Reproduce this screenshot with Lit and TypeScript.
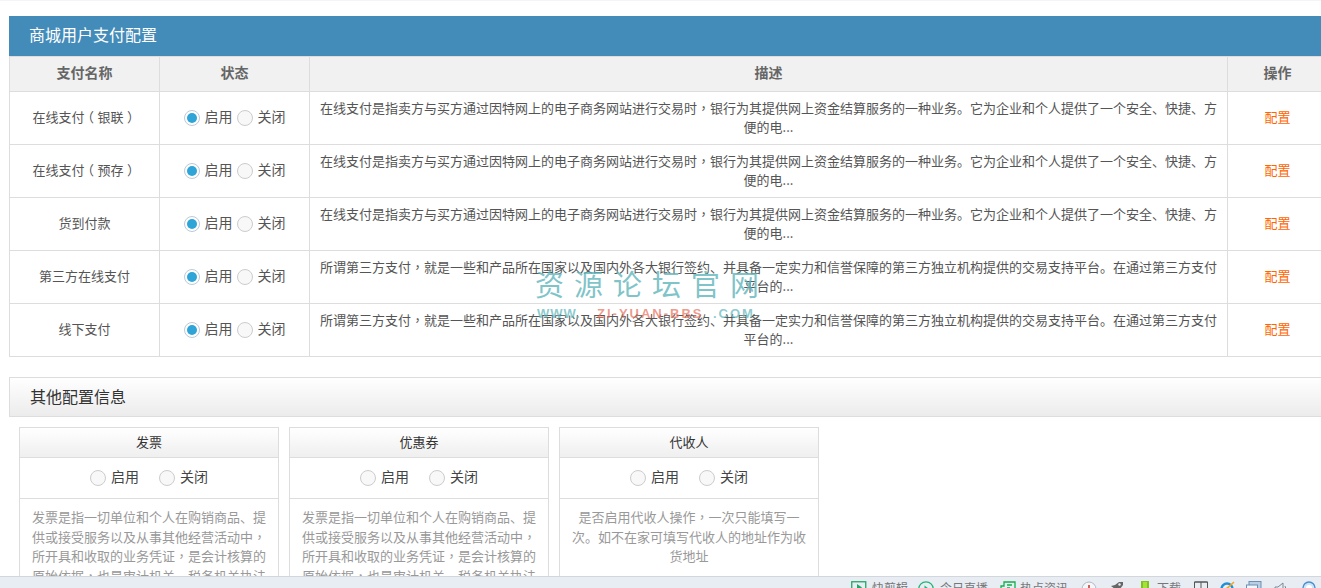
import { LitElement, html, css } from "lit";
import { customElement } from "lit/decorators.js";

const online = "在线支付是指卖方与买方通过因特网上的电子商务网站进行交易时，银行为其提供网上资金结算服务的一种业务。它为企业和个人提供了一个安全、快捷、方便的电...";
const third = "所谓第三方支付，就是一些和产品所在国家以及国内外各大银行签约、并具备一定实力和信誉保障的第三方独立机构提供的交易支持平台。在通过第三方支付平台的...";
const rows = [
  ["在线支付（银联）", online],
  ["在线支付（预存）", online],
  ["货到付款", online],
  ["第三方在线支付", third],
  ["线下支付", third],
];
const invoice = "发票是指一切单位和个人在购销商品、提供或接受服务以及从事其他经营活动中，所开具和收取的业务凭证，是会计核算的原始依据，也是审计机关、税务机关执法检查的重要依据。";
const cards = [
  ["发票", invoice],
  ["优惠券", invoice],
  ["代收人", "是否启用代收人操作，一次只能填写一次。如不在家可填写代收人的地址作为收货地址"],
];

/* Full-width commas and brackets sit mid-cell in the reference. */
const punct = (text: string) =>
  text.split(/([，（）])/).map((part) => {
    if (part === "，") return html`<span class="pc">${part}</span>`;
    if (part === "（") return html`<span class="po">${part}</span>`;
    if (part === "）") return html`<span class="pe">${part}</span>`;
    return part;
  });

@customElement("app-root")
export class AppRoot extends LitElement {
  static styles = css`
    :host { display: block; height: 588px; overflow: hidden; position: relative; background: #fff; color: #555;
      font-family: "Noto Sans CJK SC", "Liberation Sans", sans-serif; font-size: 13px; line-height: 19.5px; }
    .pc { font-family: "Noto Sans CJK TC", "Noto Sans CJK SC", sans-serif; }
    .po { display: inline-block; transform: translateX(-3.5px); }
    .pe { display: inline-block; transform: translateX(3.5px); }
    .strip { height: 1px; background: #f2f4f8; }
    .main { padding: 15px 0 0 9px; }
    .bar { height: 40px; background: #438cb9; color: #fff; font-size: 16px; line-height: 37px; padding-left: 20px; }
    table { width: 1319px; table-layout: fixed; border-collapse: separate; border-spacing: 0; }
    th, td { box-sizing: border-box; border-right: 1px solid #ddd; border-bottom: 1px solid #ddd; text-align: center; vertical-align: middle; }
    th:first-child, td:first-child { border-left: 1px solid #ddd; }
    th { height: 36px; background: #f1f1f1; color: #666; font-size: 14px; font-weight: 700; border-top: 1px solid #ddd; padding: 0 0 2px; }
    td { height: 53px; padding: 0 9px 2px; }
    td.state { padding: 0; }
    .pick { display: flex; justify-content: center; align-items: center; font-size: 14px; }
    .radio { box-sizing: border-box; width: 16px; height: 16px; border-radius: 50%; border: 1px solid #ccc; background: #f8f8f8; margin-right: 5px; flex: none; }
    .radio.on { border-color: #bccad8; background: #fff; display: flex; align-items: center; justify-content: center; }
    .radio.on::after { content: ""; width: 10px; height: 10px; border-radius: 50%; background: #2fa4d6; }
    .opt { display: flex; align-items: center; }
    .lbl { padding-bottom: 2px; }
    .tight { gap: 4px; }
    .wide { gap: 20px; }
    a.cfg { color: #ff6600; text-decoration: none; }
    .bar2 { box-sizing: border-box; height: 40px; margin-top: 20px; border: 1px solid #ddd; border-right: none;
      background: linear-gradient(#fff, #ececec); color: #333; font-size: 16px; line-height: 36px; padding-left: 20px; }
    .cards { display: flex; gap: 10px; padding: 10px 0 0 10px; }
    .card { box-sizing: border-box; width: 260px; border: 1px solid #ddd; }
    .card h3 { margin: 0; height: 30px; box-sizing: border-box; border-bottom: 1px solid #ddd; background: linear-gradient(#fff, #efefef);
      color: #333; font-size: 13px; font-weight: 400; line-height: 27px; text-align: center; }
    .card .pick { height: 41px; border-bottom: 1px solid #ddd; box-sizing: border-box; color: #444; }
    .card p { margin: 0; padding: 8px 11px 12px; color: #999; text-align: center; }
    .mark { position: absolute; left: 535px; top: 265px; pointer-events: none; }
    .big { font-size: 29px; line-height: 36px; letter-spacing: 10px; color: rgba(92, 180, 186, .78); white-space: nowrap; }
    .small { display: flex; font-family: "Liberation Sans", sans-serif; font-size: 13px; font-weight: 700; line-height: 16px; letter-spacing: 2px; margin: 5px 0 0 2px; white-space: nowrap; color: rgba(92, 180, 186, .7); }
    .small .www { width: 60px; letter-spacing: 1px; }
    .small .red { width: 116px; color: rgba(232, 110, 90, .7); }
    .status { position: fixed; left: 0; right: 0; bottom: 0; height: 12px; box-sizing: border-box; border-top: 1px solid #d3d6da; background: #e8edf4; overflow: hidden; color: #777; font-size: 12px; line-height: 16px; display: flex; padding: 4px 0 0 851px; }
    .status svg { flex: none; display: block; }
    .s { display: flex; align-items: flex-start; white-space: nowrap; }
    .s span { margin-top: -1px; }
    .w67 { width: 67px; } .w82 { width: 82px; } .w81 { width: 81px; } .w29 { width: 29px; } .w31 { width: 31px; }
    .w53 { width: 53px; } .w26 { width: 26px; } .w28 { width: 28px; }
    .mr4 { margin-right: 4px; } .mr5 { margin-right: 5px; } .mr6 { margin-right: 6px; }
    .s .ml8 { margin-left: 8px; }
  `;

  private pick(on: boolean, cls: string) {
    return html`<div class="pick ${cls}">
      <span class="opt"><span class="radio ${on ? "on" : ""}"></span><span class="lbl">启用</span></span>
      <span class="opt"><span class="radio"></span><span class="lbl">关闭</span></span>
    </div>`;
  }

  render() {
    return html`
      <div class="strip"></div>
      <div class="main">
        <div class="bar">商城用户支付配置</div>
        <table>
          <colgroup><col style="width:151px" /><col style="width:150px" /><col style="width:918px" /><col /></colgroup>
          <thead><tr><th>支付名称</th><th>状态</th><th>描述</th><th>操作</th></tr></thead>
          <tbody>
            ${rows.map(([n, d]) => html`<tr>
              <td>${punct(n)}</td>
              <td class="state">${this.pick(true, "tight")}</td>
              <td>${punct(d)}</td>
              <td><a class="cfg" href="#">配置</a></td>
            </tr>`)}
          </tbody>
        </table>
        <div class="bar2">其他配置信息</div>
        <div class="cards">
          ${cards.map(([t, d]) => html`<div class="card">
            <h3>${t}</h3>
            ${this.pick(false, "wide")}
            <p>${punct(d)}</p>
          </div>`)}
        </div>
      </div>
      <div class="mark">
        <div class="big">资源论坛官网</div>
        <div class="small"><span class="www">WWW.</span><span class="red">ZI-YUAN-BBS</span><span>.COM</span></div>
      </div>
      <div class="status">
        <div class="s w67">
          <svg class="mr5" width="16" height="16" viewBox="0 0 16 16"><rect x=".75" y=".75" width="14" height="13" fill="none" stroke="#1fa864" stroke-width="1.3"/><path d="M6 3l5 3.5L6 10z" fill="#1fa864"/></svg><span>快剪辑</span>
        </div>
        <div class="s w82">
          <svg class="mr6" width="16" height="16" viewBox="0 0 16 16"><circle cx="8" cy="8" r="7.2" fill="none" stroke="#22b573" stroke-width="1.3"/><path d="M6.5 4.5l4 3-4 3z" fill="#22b573"/></svg><span>今日直播</span>
        </div>
        <div class="s w81">
          <svg class="mr4" width="16" height="16" viewBox="0 0 16 16"><path d="M4 1h11v12H1V5h3z" fill="none" stroke="#10b04a" stroke-width="1.3"/><path d="M7 4h5M7 7h3" stroke="#10b04a" stroke-width="1.3"/></svg><span>热点资讯</span>
        </div>
        <div class="s w29">
          <svg width="16" height="16" viewBox="0 0 16 16"><circle cx="8" cy="8" r="7" fill="#f4f6f8" stroke="#aeb9c6"/><path d="M8 4v5" stroke="#d0392b" stroke-width="1.6"/></svg>
        </div>
        <div class="s w31">
          <svg width="14" height="16" viewBox="0 0 14 16"><path d="M1 5l4-1 4-3h4v3l-3 4-3 4-2-4z" fill="#666"/><circle cx="9.5" cy="3.5" r="1.2" fill="#e8edf4"/></svg>
        </div>
        <div class="s w53">
          <svg width="8" height="16" viewBox="0 0 8 16"><rect width="8" height="16" fill="#7fc31c"/><rect x="2" y="1" width="4" height="14" fill="#a4e23a"/></svg><span class="ml8">下载</span>
        </div>
        <div class="s w26">
          <svg width="14" height="16" viewBox="0 0 14 16"><path d="M.5 1h13v12H.5zM7 1v12M.5 1h13" fill="none" stroke="#555"/></svg>
        </div>
        <div class="s w26">
          <svg width="15" height="16" viewBox="0 0 15 16"><circle cx="7" cy="8" r="5.5" fill="none" stroke="#1f8fd8" stroke-width="2.4"/><path d="M1 11C5 9 10 5 14 1" fill="none" stroke="#f5a623" stroke-width="1.6"/></svg>
        </div>
        <div class="s w28">
          <svg width="16" height="16" viewBox="0 0 16 16"><rect x="3" y=".5" width="12" height="10" fill="#b9cfe6" stroke="#6d8fb3"/><rect x=".5" y="4" width="11" height="10" fill="#f3f6fa" stroke="#6d8fb3"/></svg>
        </div>
        <div class="s w28">
          <svg width="15" height="16" viewBox="0 0 15 16"><path d="M1 6h3l5-4v12l-5-4H1z" fill="none" stroke="#7a8796"/><path d="M11 5q2 3 0 6" fill="none" stroke="#7a8796"/></svg>
        </div>
        <div class="s">
          <svg width="14" height="16" viewBox="0 0 14 16"><circle cx="7" cy="7" r="6" fill="#cfe4f7" stroke="#4a90d0" stroke-width="1.4"/><circle cx="7" cy="7" r="3" fill="#fff"/></svg>
        </div>
      </div>
    `;
  }
}
